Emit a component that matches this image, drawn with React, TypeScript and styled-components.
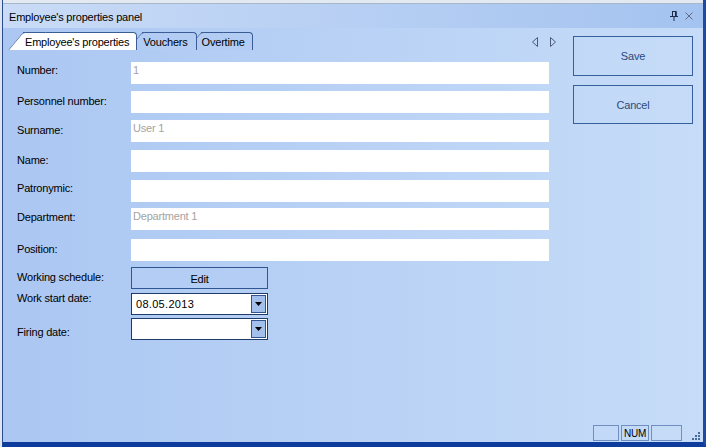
import React from "react"
import styled, { createGlobalStyle } from "styled-components"

const GlobalStyle = createGlobalStyle`
  html, body {
    margin: 0;
    padding: 0;
    overflow: hidden;
  }
  body {
    font-family: "Liberation Sans", Arial, sans-serif;
    font-size: 11px;
    letter-spacing: -0.2px;
    color: #000;
  }
`

const Frame = styled.div`
  width: 706px;
  height: 447px;
  display: flex;
  background: #dfe6ef;
`

const Window = styled.div`
  flex: 1;
  margin-left: 2px;
  display: flex;
  flex-direction: column;
  border-left: 1px solid #2a4c8c;
  border-right: 3px solid #1c4aa5;
  border-bottom: 5px solid #0e3c9c;
  box-shadow: inset 0 -1px 0 #6f95d8;
`

const TopStrip = styled.div`
  height: 3px;
  background: #e3e9f1;
  border-bottom: 1px solid #a9b7cb;
`

const TitleBar = styled.div`
  height: 24px;
  display: flex;
  align-items: center;
  padding: 0 10px 0 6px;
  background: linear-gradient(to right, #c9dbf6, #b7cff3 50%, #a4c3f0);
`

const TitleText = styled.div`
  flex: 1;
  padding-top: 1px;
`

const TitleIcons = styled.div`
  display: flex;
  align-items: center;
  gap: 7px;
`

const Body = styled.div`
  flex: 1;
  display: flex;
  flex-direction: column;
  background: linear-gradient(to right, #abc7f2, #c6dcf8);
`

const Content = styled.div`
  flex: 1;
  display: flex;
`

const Main = styled.div`
  flex: 1;
  display: flex;
  flex-direction: column;
`

const TabStrip = styled.div`
  height: 22px;
  box-sizing: border-box;
  padding: 4px 17px 0 20px;
  display: flex;
  align-items: flex-end;
`

const Tab = styled.div<{ $active?: boolean; $z: number; $gap: number; $pl: number; $pr: number }>`
  position: relative;
  z-index: ${p => p.$z};
  height: 18px;
  box-sizing: border-box;
  margin-left: ${p => p.$gap}px;
  padding: 2px ${p => p.$pr}px 0 ${p => p.$pl}px;
  line-height: 14px;
  background: ${p => (p.$active ? "#ffffff" : "#b2ccf3")};
  border-top: 1px solid #3b5d95;
  border-right: 1px solid #3b5d95;
  border-top-right-radius: 4px;

  &::before {
    content: "";
    position: absolute;
    z-index: -1;
    left: -15px;
    top: -1px;
    bottom: 0;
    width: 22px;
    background: ${p => (p.$active ? "#ffffff" : "#b2ccf3")};
    border-left: 1px solid #3b5d95;
    border-top: 1px solid #3b5d95;
    border-top-left-radius: 3px;
    transform: skewX(-40deg);
    transform-origin: bottom left;
  }
`

const Arrows = styled.div`
  margin-left: auto;
  align-self: center;
  display: flex;
  gap: 12px;
  padding-top: 2px;
`

const Form = styled.div`
  padding-left: 14px;
  display: flex;
  flex-direction: column;
`

const Row = styled.div<{ $mt: number }>`
  margin-top: ${p => p.$mt}px;
  display: grid;
  grid-template-columns: 114px 418px;
  height: 22px;
`

const Label = styled.div<{ $top: number }>`
  margin-top: ${p => p.$top}px;
  line-height: 13px;
`

const TextInput = styled.div`
  height: 22px;
  box-sizing: border-box;
  background: #ffffff;
  padding: 2px 2px 0;
  line-height: 13px;
  color: #a3a3a3;
`

const EditButton = styled.div`
  width: 137px;
  height: 22px;
  box-sizing: border-box;
  border: 1px solid #2f5690;
  background: #b3cdf4;
  display: flex;
  align-items: center;
  justify-content: center;
  padding-top: 1px;
`

const DateBox = styled.div`
  width: 137px;
  height: 22px;
  box-sizing: border-box;
  border: 1px solid #1f3b6a;
  background: #ffffff;
  display: flex;
  align-items: stretch;
  padding: 1px;
`

const DateText = styled.div`
  flex: 1;
  padding-left: 3px;
  display: flex;
  align-items: center;
  letter-spacing: 0.3px;
`

const DropButton = styled.div`
  width: 15px;
  box-sizing: border-box;
  border: 1px solid #2f5490;
  background: #a3c0ed;
  display: flex;
  align-items: center;
  justify-content: center;
`

const Side = styled.div`
  width: 130px;
  padding-top: 8px;
  display: flex;
  flex-direction: column;
  gap: 9px;
`

const ActionButton = styled.div<{ $h: number }>`
  width: 120px;
  height: ${p => p.$h}px;
  box-sizing: border-box;
  border: 1px solid #36609c;
  color: #2a4a7c;
  display: flex;
  align-items: center;
  justify-content: center;
`

const StatusBar = styled.div`
  height: 19px;
  display: flex;
  align-items: flex-end;
  justify-content: flex-end;
  padding-bottom: 1px;
  box-sizing: border-box;
`

const StatusCell = styled.div<{ $w: number }>`
  width: ${p => p.$w}px;
  height: 16px;
  box-sizing: border-box;
  margin-left: 2px;
  border: 1px solid #6f8fc2;
  font-size: 10px;
  letter-spacing: -0.3px;
  display: flex;
  align-items: center;
  justify-content: center;
`

const Grip = styled.div`
  width: 21px;
  height: 16px;
  display: flex;
  align-items: flex-end;
  justify-content: flex-end;
  padding-right: 2px;
  box-sizing: border-box;
`

const PinIcon = () => (
  <svg width="8" height="10" viewBox="0 0 8 10">
    <path d="M2 0.5H6V5" fill="none" stroke="#1e2d4a" strokeWidth="1" />
    <rect x="5" y="0" width="1.6" height="5" fill="#1e2d4a" />
    <rect x="0" y="5" width="8" height="1" fill="#1e2d4a" />
    <rect x="2" y="0" width="1" height="5" fill="#1e2d4a" />
    <rect x="3.5" y="6" width="1" height="4" fill="#1e2d4a" />
  </svg>
)

const CloseIcon = () => (
  <svg width="8" height="8" viewBox="0 0 8 8">
    <path d="M0.5 0.5L7.5 7.5M7.5 0.5L0.5 7.5" stroke="#5d6c84" strokeWidth="1" />
  </svg>
)

const ArrowIcon = ({ dir }: { dir: "left" | "right" }) => (
  <svg width="6" height="10" viewBox="0 0 6 10">
    <path
      d={dir === "left" ? "M5.5 0.5V9.5L0.5 5Z" : "M0.5 0.5V9.5L5.5 5Z"}
      fill="none"
      stroke="#4a5a7a"
      strokeWidth="1"
    />
  </svg>
)

const DownIcon = () => (
  <svg width="7" height="4" viewBox="0 0 7 4">
    <path d="M0 0H7L3.5 4Z" fill="#000" />
  </svg>
)

const GripIcon = () => (
  <svg width="10" height="9" viewBox="0 0 10 9">
    {[
      [7, 0], [4, 3], [7, 3], [1, 6], [4, 6], [7, 6],
    ].map(([x, y], i) => (
      <rect key={i} x={x} y={y} width="2" height="2" fill="#4a6a9a" />
    ))}
  </svg>
)

const fields = [
  { label: "Number:", mt: 12, top: 2, value: "1" },
  { label: "Personnel number:", mt: 7, top: 4, value: "" },
  { label: "Surname:", mt: 7, top: 4, value: "User 1" },
  { label: "Name:", mt: 8, top: 4, value: "" },
  { label: "Patronymic:", mt: 8, top: 1.5, value: "" },
  { label: "Department:", mt: 6, top: 2.5, value: "Department 1" },
  { label: "Position:", mt: 9, top: 3.5, value: "" },
]

const DateField = ({ value }: { value: string }) => (
  <DateBox>
    <DateText>{value}</DateText>
    <DropButton><DownIcon /></DropButton>
  </DateBox>
)

export default function App() {
  return (
    <>
      <GlobalStyle />
      <Frame>
        <Window>
          <TopStrip />
          <TitleBar>
            <TitleText>Employee's properties panel</TitleText>
            <TitleIcons>
              <PinIcon />
              <CloseIcon />
            </TitleIcons>
          </TitleBar>
          <Body>
            <Content>
              <Main>
                <TabStrip>
                  <Tab $active $z={3} $gap={0} $pl={2} $pr={7}>Employee's properties</Tab>
                  <Tab $z={2} $gap={5} $pl={1} $pr={8}>Vouchers</Tab>
                  <Tab $z={1} $gap={4} $pl={1} $pr={7}>Overtime</Tab>
                  <Arrows>
                    <ArrowIcon dir="left" />
                    <ArrowIcon dir="right" />
                  </Arrows>
                </TabStrip>
                <Form>
                  {fields.map(f => (
                    <Row key={f.label} $mt={f.mt}>
                      <Label $top={f.top}>{f.label}</Label>
                      <TextInput>{f.value}</TextInput>
                    </Row>
                  ))}
                  <Row $mt={6}>
                    <Label $top={4}>Working schedule:</Label>
                    <EditButton>Edit</EditButton>
                  </Row>
                  <Row $mt={4}>
                    <Label $top={-1}>Work start date:</Label>
                    <DateField value="08.05.2013" />
                  </Row>
                  <Row $mt={3}>
                    <Label $top={8}>Firing date:</Label>
                    <DateField value="" />
                  </Row>
                </Form>
              </Main>
              <Side>
                <ActionButton $h={40}>Save</ActionButton>
                <ActionButton $h={39}>Cancel</ActionButton>
              </Side>
            </Content>
            <StatusBar>
              <StatusCell $w={26} />
              <StatusCell $w={28}>NUM</StatusCell>
              <StatusCell $w={31} />
              <Grip><GripIcon /></Grip>
            </StatusBar>
          </Body>
        </Window>
      </Frame>
    </>
  )
}
